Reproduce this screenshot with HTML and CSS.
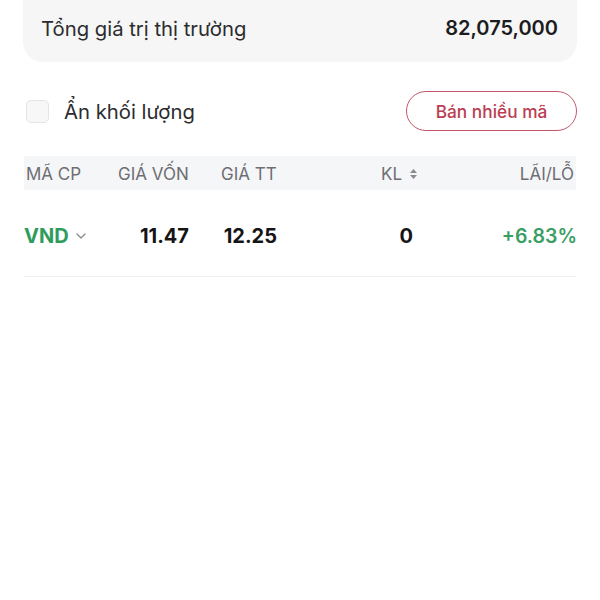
FILE: index.html
```html
<!DOCTYPE html>
<html lang="vi">
<head>
<meta charset="utf-8">
<link rel="stylesheet" href="styles.css">
</head>
<body>
<div class="page">
  <div class="summary">
    <span class="summary-label">Tổng giá trị thị trường</span>
    <span class="summary-value">82,075,000</span>
  </div>
  <div class="toolbar">
    <label class="check">
      <span class="box"></span>
      <span class="check-label">Ẩn khối lượng</span>
    </label>
    <button class="sell-btn">Bán nhiều mã</button>
  </div>
  <div class="table">
    <div class="thead">
      <span class="h-code">MÃ CP</span>
      <span class="h-cost">GIÁ VỐN</span>
      <span class="h-price">GIÁ TT</span>
      <span class="h-vol">KL <svg class="sort" width="9" height="12" viewBox="0 0 9 12"><path d="M4.5 1 L8 5 H1 Z M4.5 11 L8 7 H1 Z" fill="#8a8a8e"/></svg></span>
      <span class="h-pl">LÃI/LỖ</span>
    </div>
    <div class="row">
      <span class="code">VND <svg class="chev" width="10" height="6" viewBox="0 0 10 6"><path d="M1 1 L5 5 L9 1" fill="none" stroke="#8a8a8a" stroke-width="1.3" stroke-linecap="round" stroke-linejoin="round"/></svg></span>
      <span class="num">11.47</span>
      <span class="num">12.25</span>
      <span class="num">0</span>
      <span class="up">+6.83%</span>
    </div>
  </div>
</div>
</body>
</html>
```

FILE: styles.css
```css
html, body {
  margin: 0;
  padding: 0;
  background: #ffffff;
}
body {
  font-family: "Inter", "Noto Sans", sans-serif;
  color: #1c1c1e;
}
.page {
  width: 600px;
  height: 600px;
  overflow: hidden;
}
.summary {
  margin: -20px 23px 0 23px;
  height: 82px;
  padding: 14px 19px 0 18px;
  box-sizing: border-box;
  background: #f6f6f7;
  border-radius: 0 0 20px 20px;
  display: flex;
  align-items: center;
  justify-content: space-between;
}
.summary-label {
  font-size: 20.3px;
  color: #2c2c2e;
}
.summary-value {
  font-size: 20px;
  font-weight: 600;
  color: #1c1c1e;
}
.toolbar {
  display: flex;
  align-items: center;
  justify-content: space-between;
  padding: 0 23px 0 26px;
  margin-top: 29px;
  height: 40px;
}
.check {
  display: flex;
  align-items: center;
  gap: 15px;
}
.box {
  width: 23px;
  height: 23px;
  border: 1.5px solid #e4e4e7;
  border-radius: 5px;
  background: #f7f7f8;
  box-sizing: border-box;
}
.check-label {
  font-size: 20.3px;
  color: #2c2c2e;
}
.sell-btn {
  width: 171px;
  height: 40px;
  border: 1.5px solid #c4566a;
  border-radius: 20px;
  background: #fff;
  color: #bb3d52;
  font-family: inherit;
  font-size: 17.3px;
  font-weight: 500;
  padding: 0;
}
.table {
  margin-top: 25px;
}
.thead {
  margin: 0 24px;
  height: 34px;
  background: #f5f6f8;
  display: flex;
  align-items: center;
  font-size: 17px;
  color: #6e6e73;
  padding: 1px 2px 0 2px;
  box-sizing: border-box;
}
.h-code { width: 92px; }
.h-cost { width: 103px; }
.h-price { width: 160px; }
.h-vol {
  display: flex;
  align-items: center;
  gap: 7px;
}
.h-pl { margin-left: auto; }
.row {
  margin: 0 24px;
  height: 87px;
  padding-top: 5px;
  box-sizing: border-box;
  display: grid;
  grid-template-columns: 92px 73px 88px 136px 1fr;
  align-items: center;
  font-size: 20px;
  font-weight: 700;
  border-bottom: 1px solid #f0f0f2;
}
.num { justify-self: end; color: #151517; }
.code {
  color: #2e9c5c;
  display: flex;
  align-items: center;
  gap: 7px;
}
.up {
  color: #3b9e64;
  justify-self: end;
  font-weight: 600;
  font-size: 19.5px;
  margin-right: -1px;
}
.chev { margin-top: 1px; }
```
